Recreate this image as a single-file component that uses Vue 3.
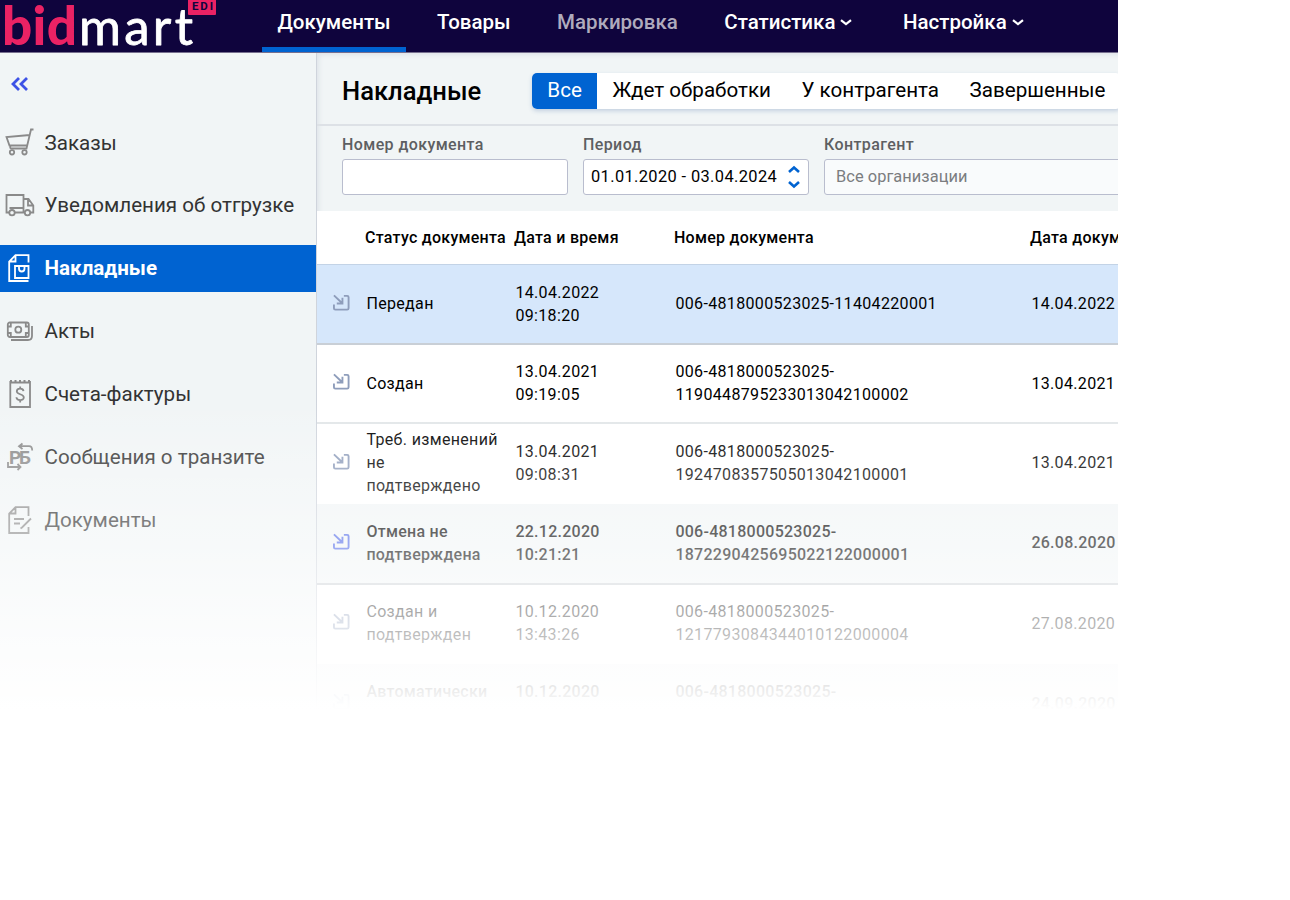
<template>
  <div class="app">
    <header class="topbar">
      <svg class="logo" width="262" height="52" viewBox="0 0 262 52">
        <text class="logo-bid" x="2" y="45" textLength="75">bid</text>
        <text class="logo-mart" x="79" y="45" textLength="114">mart</text>
        <rect x="188" y="-4" width="28" height="19" rx="1" fill="#ea2264" />
        <text class="logo-edi" x="192" y="10" textLength="21">EDI</text>
      </svg>
      <nav class="nav">
        <a
          v-for="link in links"
          :key="link.label"
          class="nav-link"
          :class="{ active: link.active, muted: link.muted }"
        >
          <span>{{ link.label }}</span>
          <svg v-if="link.dropdown" class="nav-arrow" width="12" height="7" viewBox="0 0 12 7">
            <path d="M1 1.2 L6 5.2 L11 1.2" />
          </svg>
        </a>
      </nav>
    </header>

    <div class="body">
      <aside class="sidebar">
        <div class="collapse">
          <svg width="18" height="14" viewBox="0 0 18 14">
            <path d="M8 1 L2 7 L8 13 M16 1 L10 7 L16 13" />
          </svg>
        </div>
        <div
          v-for="item in menu"
          :key="item.label"
          class="menu-item"
          :class="{ selected: item.selected }"
        >
          <svg class="menu-icon" width="30" height="30" viewBox="0 0 30 30">
            <g v-if="item.icon === 'cart'">
              <path d="M28.5 1.5 H26 L21.5 20.5 H6.5 M24.8 7 L1.5 9 L4.5 17.5 H22 M6.5 20.5 C4.5 20.5 5 18 6.5 17.5" />
              <circle cx="7" cy="24.3" r="2.2" />
              <circle cx="19.5" cy="24.3" r="2.2" />
            </g>
            <g v-else-if="item.icon === 'truck'">
              <path d="M4 22.5 H1.5 V5 H18.5 V22.5 H10 M18.5 9 H23.5 L28.3 15.5 V22.5 H25.5 M4.5 18 H18.5 M23 9.5 V15.5 H28" />
              <circle cx="7" cy="22.7" r="2.7" />
              <circle cx="22.5" cy="22.7" r="2.7" />
            </g>
            <g v-else-if="item.icon === 'invoice'">
              <path d="M23.5 9.5 V2.2 H10.5 L4.2 8.5 V28 H23.5 M10.5 2.2 V8.5 H4.2" />
              <path d="M10 13 H23.5 V25 H10 Z M14 13 V15.5 C14 19.5 19.5 19.5 19.5 15.5 V13" />
            </g>
            <g v-else-if="item.icon === 'money'">
              <rect x="2.8" y="6.5" width="21" height="14.5" rx="2" />
              <circle cx="13.3" cy="13.7" r="3" />
              <path d="M2.8 10.5 H5.8 V6.5 M20.8 6.5 V10.5 H23.8 M2.8 17 H5.8 V21 M20.8 21 V17 H23.8 M6 24 H23 Q27 24 27 20 V10" />
            </g>
            <g v-else-if="item.icon === 'bill'">
              <path d="M5.3 2 V28 H25 V2 M5.3 3.5 H25" />
              <path class="teeth" d="M5 2 H25" />
              <path d="M18.5 12.2 C18 8.7 11.7 9 11.8 12.5 C12 16 18.8 14.5 18.8 18.5 C18.8 22 11.7 22 11.4 18.3 M15.2 7.5 V9.7 M15.2 21 V23.5" />
            </g>
            <g v-else-if="item.icon === 'transit'">
              <text x="4" y="21.5" textLength="22" class="icon-text">РБ</text>
              <path d="M17.5 1.5 L14 4.2 L17.5 7 M14.5 4.2 H24 Q27.2 4.2 27.2 8.5 M3 20 V25 H15 M12.5 22 L15.5 25 L12.5 28" />
            </g>
            <g v-else>
              <path d="M23.5 11 V2.2 H10.5 L4.2 8.5 V28 H23.5 V22 M10.5 2.2 V8.5 H4.2 M9 14 H19 M9 18.5 H15 M26 13.5 L17 22.5 L15.5 23.5" />
            </g>
          </svg>
          <span class="menu-label">{{ item.label }}</span>
        </div>
      </aside>

      <main class="content">
        <div class="heading">
          <h1>Накладные</h1>
          <div class="tabs">
            <div v-for="tab in tabs" :key="tab" class="tab" :class="{ active: tab === 'Все' }">
              {{ tab }}
            </div>
          </div>
        </div>

        <div class="filters">
          <div class="field">
            <label>Номер документа</label>
            <div class="control"></div>
          </div>
          <div class="field">
            <label>Период</label>
            <div class="control period">
              <span>01.01.2020 - 03.04.2024</span>
              <svg width="14" height="24" viewBox="0 0 14 24">
                <path d="M2 7 L7 2.5 L12 7 M2 17 L7 21.5 L12 17" />
              </svg>
            </div>
          </div>
          <div class="field wide">
            <label>Контрагент</label>
            <div class="control placeholder">Все организации</div>
          </div>
        </div>

        <div class="table">
          <div class="row head">
            <span></span>
            <span>Статус документа</span>
            <span>Дата и время</span>
            <span>Номер документа</span>
            <span>Дата документа</span>
          </div>
          <div v-for="row in rows" :key="row.number" class="row" :class="row.type">
            <svg class="row-icon" width="17" height="17" viewBox="0 0 18 18">
              <path d="M1 1.5 L9.5 9.5 M10 4 V10 H4 M11.5 2 H15 Q16.5 2 16.5 3.5 V15 Q16.5 16.5 15 16.5 H2.5 Q1 16.5 1 15 V11" />
            </svg>
            <span class="status">{{ row.status }}</span>
            <span class="lines">{{ row.date }}<br />{{ row.time }}&nbsp;</span>
            <span class="number">{{ row.number }}</span>
            <span>{{ row.docDate }}</span>
          </div>
        </div>
      </main>
    </div>
    <div class="fade"></div>
  </div>
</template>

<script setup>
const links = [
  { label: 'Документы', active: true },
  { label: 'Товары' },
  { label: 'Маркировка', muted: true },
  { label: 'Статистика', dropdown: true },
  { label: 'Настройка', dropdown: true }
]

const menu = [
  { label: 'Заказы', icon: 'cart' },
  { label: 'Уведомления об отгрузке', icon: 'truck' },
  { label: 'Накладные', icon: 'invoice', selected: true },
  { label: 'Акты', icon: 'money' },
  { label: 'Счета-фактуры', icon: 'bill' },
  { label: 'Сообщения о транзите', icon: 'transit' },
  { label: 'Документы', icon: 'edit' }
]

const tabs = ['Все', 'Ждет обработки', 'У контрагента', 'Завершенные']

const rows = [
  { status: 'Передан', date: '14.04.2022', time: '09:18:20', number: '006-4818000523025-11404220001', docDate: '14.04.2022', type: 'current' },
  { status: 'Создан', date: '13.04.2021', time: '09:19:05', number: '006-4818000523025-\n1190448795233013042100002', docDate: '13.04.2021' },
  { status: 'Треб. изменений\nне\nподтверждено', date: '13.04.2021', time: '09:08:31', number: '006-4818000523025-\n1924708357505013042100001', docDate: '13.04.2021', type: 'borderless' },
  { status: 'Отмена не\nподтверждена', date: '22.12.2020', time: '10:21:21', number: '006-4818000523025-\n1872290425695022122000001', docDate: '26.08.2020', type: 'unread' },
  { status: 'Создан и\nподтвержден', date: '10.12.2020', time: '13:43:26', number: '006-4818000523025-\n1217793084344010122000004', docDate: '27.08.2020', type: 'borderless' },
  { status: 'Автоматически\n\u00a0', date: '10.12.2020', time: '', number: '006-4818000523025-\n\u00a0', docDate: '24.09.2020', type: 'unread light' }
]
</script>

<style>
body {
  background: #fff;
}
</style>

<style scoped>
.app {
  position: relative;
  width: 1118px;
  height: 720px;
  overflow: hidden;
  font-family: Roboto, "Liberation Sans", sans-serif;
  color: #000;
}

.topbar {
  display: flex;
  height: 53px;
  box-sizing: border-box;
  border-bottom: 1px solid #77708f;
  background: #0f043d;
}

.logo {
  flex: none;
  font-family: Lato, sans-serif;
}

.logo-bid {
  font-size: 53px;
  font-weight: 900;
  fill: #ea2264;
}

.logo-mart {
  font-size: 51px;
  fill: #fff;
  stroke: #fff;
  stroke-width: 0.8;
  stroke-linejoin: round;
}

.logo-edi {
  font-family: Roboto, sans-serif;
  font-size: 11.5px;
  font-weight: 700;
  fill: #0f043d;
}

.nav {
  display: flex;
  gap: 15.5px;
}

.nav-link {
  display: flex;
  align-items: center;
  gap: 5px;
  height: 52px;
  padding: 0 15.5px 8px;
  box-sizing: border-box;
  color: #fff;
  font-size: 20.5px;
  font-weight: 500;
}

.nav-link.active {
  padding-bottom: 3px;
  border-bottom: 5px solid #0063d1;
}

.nav-link.muted {
  color: #afabbd;
}

.nav-arrow {
  margin-right: 4px;
  fill: none;
  stroke: #fff;
  stroke-width: 2.2;
}

.body {
  display: flex;
  height: 667px;
}

.sidebar {
  flex: none;
  width: 317px;
  box-sizing: border-box;
  border-right: 1px solid #cfd4dc;
  background: #f1f5f6;
}

.collapse {
  height: 51px;
  padding: 24px 0 0 11px;
  box-sizing: border-box;
  margin-bottom: 15px;
}

.collapse svg {
  display: block;
  fill: none;
  stroke: #3d52e6;
  stroke-width: 2.8;
}

.menu-item {
  display: flex;
  align-items: center;
  gap: 9.5px;
  height: 47px;
  margin-bottom: 15.9px;
  padding-left: 5px;
  color: #333;
  font-size: 20.6px;
}

.menu-item.selected {
  background: #0063d1;
  color: #fff;
  font-weight: 700;
}

.menu-icon {
  fill: none;
  stroke: #8a8a8a;
  stroke-width: 1.8;
}

.selected .menu-icon {
  stroke: #fff;
}

.teeth {
  stroke-dasharray: 2 2.5;
}

.icon-text {
  font-size: 19px;
  font-weight: 700;
  fill: #8a8a8a;
  stroke: none;
}

.content {
  flex: 1;
  min-width: 0;
  background: #f1f5f6;
  box-shadow: inset 4px 4px 5px -2px #dfe4e9;
}

.heading {
  display: flex;
  align-items: center;
  height: 73px;
  padding: 0 0 0 25px;
  box-sizing: border-box;
  border-bottom: 2px solid #dde1e6;
}

h1 {
  flex: none;
  width: 190px;
  margin: 5px 0 0;
  font-size: 25.6px;
  font-weight: 500;
}

.tabs {
  display: flex;
  flex: none;
  height: 36px;
  margin-top: 5px;
  border-radius: 5px;
  background: #fff;
  box-shadow: 0 2px 4px rgba(60, 100, 160, 0.25);
  overflow: hidden;
}

.tab {
  padding: 0 15.3px;
  font-size: 20.6px;
  line-height: 35px;
  white-space: nowrap;
}

.tab.active {
  background: #0063d1;
  color: #fff;
}

.filters {
  display: flex;
  gap: 15px;
  height: 85px;
  padding: 9px 0 0 25px;
  box-sizing: border-box;
}

.field {
  flex: none;
  width: 226px;
}

.field.wide {
  width: 360px;
}

.field label {
  display: block;
  height: 24px;
  color: #5d5f62;
  font-size: 16px;
  font-weight: 500;
  line-height: 20px;
  letter-spacing: 0.4px;
}

.control {
  display: flex;
  align-items: center;
  height: 36px;
  padding-bottom: 2px;
  box-sizing: border-box;
  border: 1px solid #b9bdce;
  border-radius: 3px;
  background: #fff;
  font-size: 16.4px;
}

.period {
  justify-content: space-between;
  padding: 0 7px 2px;
  letter-spacing: 0.38px;
}

.period svg {
  margin-top: 2px;
  fill: none;
  stroke: #0063d1;
  stroke-width: 2.6;
}

.placeholder {
  padding-left: 11px;
  background: #f9fbfc;
  color: #7b7d80;
  letter-spacing: 0.05px;
}

.table {
  background: #fff;
}

.row {
  display: grid;
  grid-template-columns: 33px 149px 160px 356px 140px;
  align-items: center;
  height: 79.6px;
  padding-left: 16.4px;
  box-sizing: border-box;
  border-bottom: 2px solid #e2e6e8;
  font-size: 16px;
  line-height: 23px;
  letter-spacing: 0.34px;
  white-space: nowrap;
}

.row.head {
  height: 54px;
  padding: 0 0 1px 15px;
  border-bottom: 1px solid #c3d3e6;
  font-weight: 500;
  letter-spacing: 0.27px;
}

.row.current {
  background: #d6e7fb;
  border-color: #c9cfd6;
}

.row.borderless {
  border-color: transparent;
}

.row.unread {
  height: 80.8px;
  padding-bottom: 1px;
  background: #f1f5f6;
  border-color: #c9cfd3;
  font-weight: 500;
  letter-spacing: 0.26px;
}

.row-icon {
  margin-top: -3px;
  fill: none;
  stroke: #8e9dbb;
  stroke-width: 2;
}

.unread .row-icon {
  stroke: #4f68e8;
}

.light .row-icon {
  stroke: #8e9dbb;
}

.status,
.number {
  white-space: pre-line;
}

.fade {
  position: absolute;
  left: 0;
  right: 0;
  top: 400px;
  height: 320px;
  background: linear-gradient(
    rgba(255, 255, 255, 0),
    rgba(255, 255, 255, 0.2) 60px,
    rgba(255, 255, 255, 0.42) 140px,
    rgba(255, 255, 255, 0.7) 222px,
    rgba(255, 255, 255, 0.92) 290px,
    #fff 310px
  );
}
</style>
